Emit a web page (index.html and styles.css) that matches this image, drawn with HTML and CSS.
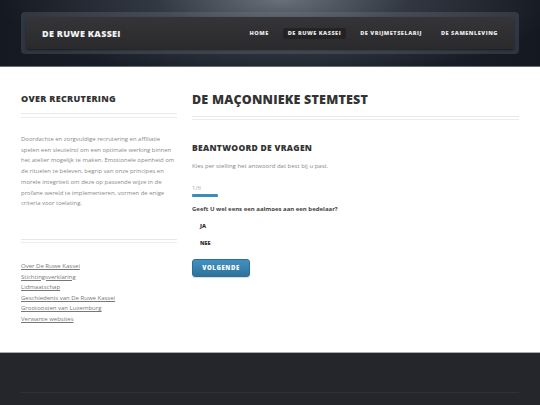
FILE: index.html
```html
<!DOCTYPE html>
<html lang="nl">
<head>
<meta charset="utf-8">
<title>De Ruwe Kassei</title>
<link rel="stylesheet" href="styles.css">
</head>
<body>
<header class="site-header">
  <div class="frame">
    <div class="bar">
      <div class="logo">DE RUWE KASSEI</div>
      <nav class="nav">
        <a class="nav-item" href="#">HOME</a>
        <a class="nav-item active" href="#">DE RUWE KASSEI</a>
        <a class="nav-item" href="#">DE VRIJMETSELARIJ</a>
        <a class="nav-item" href="#">DE SAMENLEVING</a>
      </nav>
    </div>
  </div>
</header>
<main class="content">
  <aside class="sidebar">
    <h2 class="side-title">OVER RECRUTERING</h2>
    <div class="double-rule"></div>
    <p class="side-text">Doordachte en zorgvuldige recrutering en affiliatie spelen een sleutelrol om een optimale werking binnen het atelier mogelijk te maken. Emotionele openheid om de rituelen te beleven, begrip van onze principes en morele integriteit om deze op passende wijze in de profane wereld te implementeren, vormen de enige criteria voor toelating.</p>
    <div class="double-rule rule-2"></div>
    <ul class="links">
      <li><a href="#">Over De Ruwe Kassei</a></li>
      <li><a href="#">Stichtingsverklaring</a></li>
      <li><a href="#">Lidmaatschap</a></li>
      <li><a href="#">Geschiedenis van De Ruwe Kassei</a></li>
      <li><a href="#">Grootoosten van Luxemburg</a></li>
      <li><a href="#">Verwante websites</a></li>
    </ul>
  </aside>
  <section class="main-col">
    <h1 class="page-title">DE MAÇONNIEKE STEMTEST</h1>
    <div class="double-rule"></div>
    <h3 class="sub-title">BEANTWOORD DE VRAGEN</h3>
    <p class="intro">Kies per stelling het antwoord dat best bij u past.</p>
    <div class="progress-label">1/6</div>
    <div class="progress"><div class="progress-fill" style="width:26px"></div></div>
    <p class="question">Geeft U wel eens een aalmoes aan een bedelaar?</p>
    <div class="option">JA</div>
    <div class="option">NEE</div>
    <button class="btn" type="button">VOLGENDE</button>
  </section>
</main>
<footer class="site-footer">
  <div class="footer-line"></div>
</footer>
</body>
</html>
```
FILE: styles.css
```css
* { box-sizing: border-box; }
html, body { margin: 0; padding: 0; }
body {
  font-family: "Open Sans", "Liberation Sans", sans-serif;
  background: #25262b;
  width: 540px;
  height: 405px;
  overflow: hidden;
}
.site-header {
  height: 67px;
  padding-top: 12px;
  background:
    radial-gradient(ellipse 280px 80px at 52% 0%, rgba(125,131,139,0.8) 0%, rgba(80,86,94,0.45) 45%, rgba(30,36,46,0) 100%),
    linear-gradient(90deg, #141922 0%, #1c222c 40%, #1d232d 60%, #131821 100%);
  border-bottom: 1px solid #6b6e74;
}
.frame {
  width: 498px;
  height: 42px;
  margin: 0 auto;
  padding: 5px;
  border-radius: 4px;
  background: rgba(120,126,136,0.28);
}
.bar {
  height: 32px;
  border-radius: 3px;
  background: linear-gradient(#353539, #2a2a2d);
  box-shadow: 0 1px 2px rgba(0,0,0,0.5);
  display: flex;
  align-items: center;
  justify-content: space-between;
  padding: 0 11px 0 16px;
}
.logo {
  color: #f2f2f2;
  font-weight: 800;
  font-size: 9px;
  letter-spacing: 0.3px;
}
.nav { display: flex; gap: 9px; align-items: center; }
.nav-item {
  color: #e6e6e6;
  text-decoration: none;
  font-weight: 800;
  font-size: 5.6px;
  letter-spacing: 0.5px;
  padding: 0 5px;
  height: 11px;
  line-height: 11px;
  border-radius: 2px;
}
.nav-item.active { background: #232326; }
.content {
  background: #fff;
  height: 285px;
  display: flex;
  gap: 15px;
  padding: 0 21px;
}
.sidebar { width: 156px; flex: none; padding-top: 25px; }
.main-col { flex: 1; padding-top: 24px; }
.side-title {
  margin: 0;
  font-size: 9px;
  font-weight: 800;
  color: #333;
  letter-spacing: 0.3px;
  line-height: 13px;
}
.double-rule {
  height: 5px;
  border-top: 1px solid #e8e8e8;
  border-bottom: 1px solid #ececec;
  margin-top: 8px;
}
.side-text {
  margin: 16px 0 0;
  font-size: 5.95px;
  line-height: 10.7px;
  color: #8a8a8a;
}
.rule-2 { margin-top: 30px; height: 4px; }
.links {
  list-style: none;
  margin: 18px 0 0;
  padding: 0;
  font-size: 6px;
  line-height: 10.6px;
}
.links a {
  color: #777;
  text-decoration: underline;
}
.page-title {
  margin: 0;
  font-size: 12.5px;
  font-weight: 800;
  color: #333;
  letter-spacing: 0.2px;
  line-height: 17px;
}
.main-col .double-rule { margin-top: 8px; height: 4px; }
.sub-title {
  margin: 22px 0 0;
  font-size: 8.5px;
  font-weight: 800;
  color: #333;
  letter-spacing: 0.3px;
  line-height: 12px;
}
.intro {
  margin: 7px 0 0;
  font-size: 6px;
  line-height: 10px;
  color: #888;
}
.progress-label {
  margin-top: 13px;
  font-size: 6px;
  line-height: 8px;
  color: #aaa;
}
.progress { margin-top: 2px; height: 3px; width: 100%; }
.progress-fill { height: 3px; background: #3d8bb8; border-radius: 1px; }
.question {
  margin: 7px 0 0;
  font-size: 6px;
  font-weight: 700;
  color: #444;
  line-height: 10px;
}
.option {
  margin-top: 8px;
  padding-left: 8px;
  font-size: 5.5px;
  font-weight: 800;
  color: #333;
  line-height: 9px;
}
.btn {
  margin-top: 11px;
  width: 58px;
  height: 18px;
  border: 1px solid #2c6e97;
  border-radius: 3px;
  background: linear-gradient(#4291c0, #2e729d);
  color: #fff;
  font-family: inherit;
  font-weight: 800;
  font-size: 6px;
  letter-spacing: 0.6px;
  padding: 0;
  box-shadow: 0 1px 1px rgba(0,0,0,0.15);
}
.site-footer {
  border-top: 1px solid #a9abae;
  height: 53px;
  background: #25262b;
  padding: 39px 21px 0;
}
.footer-line { height: 1px; background: #303137; }
```
